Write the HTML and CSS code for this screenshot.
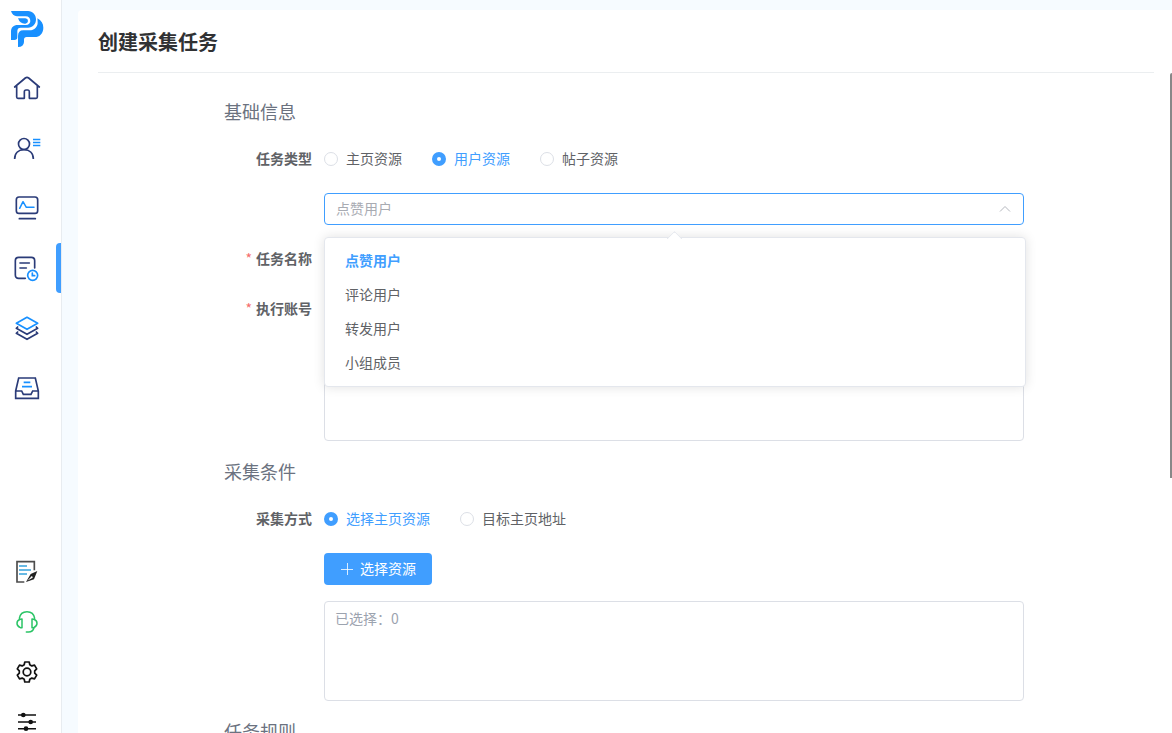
FILE: index.html
```html
<!DOCTYPE html>
<html lang="zh-CN">
<head>
<meta charset="utf-8">
<meta name="viewport" content="width=device-width, initial-scale=1">
<title>创建采集任务</title>
<link rel="stylesheet" href="styles.css">
</head>
<body>
<div class="app">
  <aside class="sidebar">
    <a class="logo" href="#" aria-label="首页">
      <svg width="34" height="38" viewBox="30 30 102 114" fill="#1890ff">
        <path d="M33 33H84C98 33 108 44 108 58C108 73 98 83 84 83H62Q52 83 52 93V112Q52 120 43 120H33V94C33 82 41 75 53 75H78C86 75 91 70 91 63C91 55 86 49 77 49H51Q37 47 33 33Z"/>
        <path d="M54 55H76Q84 56 84 63Q84 70 76 71Q60 72 54 55Z"/>
        <path d="M112 55C124 61 130 71 130 83C130 100 119 111 104 111H80Q72 111 72 119V126Q71 141 54 141V108Q54 91 70 91H88C104 91 113 79 113 68Q113 61 112 55Z"/>
      </svg>
    </a>
    <nav class="nav nav-main">
      <a class="nav-item" href="#" aria-label="主页">
        <svg width="28" height="28" viewBox="39 222 84 84" fill="none" stroke="#2a3b78" stroke-width="5" stroke-linejoin="round" stroke-linecap="round"><path d="M44 261L76 234Q81 230 86 234L118 261M50 258V291Q50 295 54 295H73V275Q73 270 78 270H84Q88 270 88 275V295H108Q112 295 112 291V258"/></svg>
      </a>
      <a class="nav-item" href="#" aria-label="用户">
        <svg width="28" height="28" viewBox="39 42 84 84" fill="none" stroke="#2a3b78" stroke-width="5"><circle cx="72" cy="72" r="16.500"/><path d="M44 117C44 99 56 89 72 89S100 99 100 117"/><path stroke="#1890ff" stroke-width="4" d="M99 58.500H121M99 67.500H121M99 76.500H121"/></svg>
      </a>
      <a class="nav-item" href="#" aria-label="监控">
        <svg width="28" height="28" viewBox="39 222 84 84" fill="none" stroke="#2a3b78" stroke-width="5" stroke-linecap="round"><rect x="49" y="231" width="64" height="49" rx="8"/><path stroke-width="5" d="M58 296H106"/><path stroke="#1890ff" stroke-width="4.500" stroke-linejoin="round" d="M59 265L69 245L79 262H102"/></svg>
      </a>
      <a class="nav-item active" href="#" aria-label="采集任务" aria-current="page">
        <svg width="28" height="28" viewBox="39 57 84 84" fill="none" stroke="#2a3b78" stroke-width="5" stroke-linecap="round"><path d="M76 130H56Q46 130 46 120V77Q46 67 56 67H94Q104 67 104 77V99M60 84H88M60 99H79"/><g stroke="#1890ff"><circle cx="98" cy="121" r="15"/><path d="M97 114V122H104"/></g></svg>
      </a>
      <a class="nav-item" href="#" aria-label="图层">
        <svg width="28" height="28" viewBox="39 237 84 84" fill="none" stroke="#2a3b78" stroke-width="5" stroke-linejoin="round" stroke-linecap="round"><path d="M53 276L49 280L81 298L113 280L109 276M53 291L49 295L81 313L113 295L109 291"/><path stroke="#1890ff" d="M49 265L81 247L113 265L81 283Z"/></svg>
      </a>
      <a class="nav-item" href="#" aria-label="收件箱">
        <svg width="28" height="28" viewBox="39 72 84 84" fill="none" stroke="#2a3b78" stroke-width="5"><path d="M47 123L56 84H106L115 123V145H47ZM47 123H65L70 133H93L98 123H115"/><path stroke="#1890ff" stroke-width="5" d="M71 97H91M66 110H96"/></svg>
      </a>
    </nav>
    <nav class="nav nav-foot">
      <a class="nav-item" href="#" aria-label="记录">
        <svg width="22" height="24" viewBox="48 45 66 72" fill="none" stroke="#4c4c4c" stroke-width="5"><path d="M73 111H51V50H103V76"/><path stroke="#36a3dc" stroke-width="5" d="M57 63H81M57 75H93M57 87H81"/><path fill="#222" stroke="none" d="M112 78L92 87L78 111L102 103ZM82 107L92 97A3 3 0 1 1 95 100Z" fill-rule="evenodd"/></svg>
      </a>
      <a class="nav-item" href="#" aria-label="客服">
        <svg width="24" height="24" viewBox="45 195 72 72" fill="none" stroke="#2bc466" stroke-width="4.500" stroke-linecap="round" stroke-linejoin="round"><path d="M58 220C60 207 69 200 81 200S102 207 104 220M66 222V248H61Q51 244 51 235T61 223ZM96 222V248H101Q111 244 111 235T101 223ZM102 249Q98 261 86 261H79"/></svg>
      </a>
      <a class="nav-item" href="#" aria-label="设置">
        <svg width="24" height="24" viewBox="0 0 24 24" fill="none" stroke="#111" stroke-width="1.700" stroke-linejoin="round"><circle cx="12" cy="12" r="3.800"/><path d="M9.800 2h4.400l.6 2.700 2 1.200 2.700-.8 2.200 3.800-2 1.900v2.400l2 1.900-2.200 3.800-2.700-.8-2 1.200-.6 2.700H9.800l-.6-2.700-2-1.200-2.700.8-2.200-3.800 2-1.900v-2.400l-2-1.900 2.200-3.800 2.700.8 2-1.200z"/></svg>
      </a>
      <a class="nav-item" href="#" aria-label="筛选">
        <svg width="22" height="22" viewBox="48 198 66 66" fill="#111" stroke="#111" stroke-width="4.500"><path d="M54 210H108M54 231H108M54 251H108"/><g stroke="none"><circle cx="70" cy="210" r="7"/><circle cx="92" cy="231" r="7"/><circle cx="78" cy="251" r="7"/></g></svg>
      </a>
    </nav>
  </aside>

  <main class="card">
    <header class="card-head"><h1>创建采集任务</h1></header>
    <form class="form">
      <h2>基础信息</h2>
      <div class="row" role="radiogroup" aria-labelledby="type-label">
        <span class="label" id="type-label">任务类型</span>
        <div class="radios">
          <label class="radio"><input type="radio" name="type"><span>主页资源</span></label>
          <label class="radio"><input type="radio" name="type" checked><span>用户资源</span></label>
          <label class="radio"><input type="radio" name="type"><span>帖子资源</span></label>
        </div>
      </div>
      <div class="row">
        <span class="label"></span>
        <div class="select-wrap">
          <select class="select" aria-label="用户类型">
            <option>点赞用户</option><option>评论用户</option><option>转发用户</option><option>小组成员</option>
          </select>
          <svg class="chevron" width="14" height="14" viewBox="0 0 14 14" fill="none" stroke="#b4b7be"><path d="M2 9.500L7 4.500L12 9.500"/></svg>
          <ul class="dropdown" role="listbox" aria-label="用户类型选项">
            <li class="option selected" role="option" aria-selected="true">点赞用户</li>
            <li class="option" role="option" aria-selected="false">评论用户</li>
            <li class="option" role="option" aria-selected="false">转发用户</li>
            <li class="option" role="option" aria-selected="false">小组成员</li>
          </ul>
        </div>
      </div>
      <div class="row">
        <label class="label required" for="task-name">任务名称</label>
        <input class="input" id="task-name" type="text">
      </div>
      <div class="row">
        <label class="label required" for="accounts">执行账号</label>
        <div class="stack">
          <div class="stack-top"></div>
          <textarea class="input textarea" id="accounts"></textarea>
        </div>
      </div>

      <h2>采集条件</h2>
      <div class="row" role="radiogroup" aria-labelledby="mode-label">
        <span class="label" id="mode-label">采集方式</span>
        <div class="radios">
          <label class="radio"><input type="radio" name="mode" checked><span>选择主页资源</span></label>
          <label class="radio"><input type="radio" name="mode"><span>目标主页地址</span></label>
        </div>
      </div>
      <div class="row">
        <span class="label"></span>
        <div class="stack">
          <button class="button" type="button">
            <svg width="14" height="14" viewBox="0 0 14 14" stroke="#fff" stroke-opacity=".8"><path d="M1 7.500H13M7.500 1V13"/></svg>
            <span>选择资源</span>
          </button>
          <textarea class="input textarea" aria-label="已选择的资源" placeholder="已选择：0"></textarea>
        </div>
      </div>

      <h2>任务规则</h2>
    </form>
    <div class="scroll-thumb"></div>
  </main>
</div>
</body>
</html>
```
FILE: styles.css
```css
* {
  box-sizing: border-box;
}

body {
  margin: 0;
  background: #f6fbff;
  color: #606266;
  font: 14px/20px "Noto Sans CJK SC", sans-serif;
}

h1, h2, ul {
  margin: 0;
  padding: 0;
}

input, select, textarea, button {
  font: inherit;
}

svg {
  display: block;
  flex: none;
}

.app {
  display: flex;
  height: 100vh;
  overflow: hidden;
}

/* Sidebar */
.sidebar {
  display: flex;
  flex: none;
  flex-direction: column;
  width: 62px;
  background: #fff;
  border-right: 1px solid #e8ecf0;
}

.logo {
  padding: 10px 0 10px 10px;
}

.nav {
  display: flex;
  flex: none;
  flex-direction: column;
}

.nav-item {
  display: flex;
  align-items: center;
  justify-content: center;
  padding-right: 7px;
}

.nav-main .nav-item {
  position: relative;
  height: 60px;
}

.nav-foot {
  gap: 28px;
  margin-top: auto;
}

.nav-foot .nav-item {
  height: 22px;
}

.active::after {
  content: "";
  position: absolute;
  top: 5px;
  right: 0;
  width: 5px;
  height: 50px;
  background: #409eff;
  border-radius: 4px 0 0 4px;
}

/* Card */
.card {
  position: relative;
  flex: 1;
  min-width: 0;
  margin: 10px 0 0 16px;
  background: #fff;
  border-radius: 4px 0 0 0;
  overflow: hidden;
}

.card-head {
  margin: 0 18px 0 20px;
  padding: 17px 0 15px;
  border-bottom: 1px solid #ebeef0;
}

h1 {
  color: #303133;
  font-size: 20px;
  line-height: 30px;
}

.scroll-thumb {
  position: absolute;
  top: 63px;
  right: 0;
  width: 2px;
  height: 405px;
  background: #888;
  border-radius: 2px 0 0 0;
}

/* Form */
.form {
  max-width: 842px;
  margin: 0 auto;
  padding: 27px 22px 0 20px;
}

h2 {
  margin-bottom: 21px;
  color: #6b7280;
  font-size: 18px;
  font-weight: 400;
  line-height: 22px;
}

.row {
  display: flex;
  min-height: 32px;
  margin-bottom: 18px;
}

.row + h2 {
  margin-top: 19px;
}

.label {
  flex: none;
  width: 100px;
  padding-right: 12px;
  font-weight: 700;
  line-height: 30px;
  text-align: right;
}

.required::before {
  content: "*";
  margin-right: 4px;
  color: #f56c6c;
  font-weight: 400;
}

.radios {
  display: flex;
  gap: 30px;
}

.radio {
  display: flex;
  align-items: center;
  gap: 8px;
}

.radio span,
.button span {
  padding-bottom: 2px;
}

.radio input {
  width: 14px;
  height: 14px;
  margin: 0;
  appearance: none;
  background: #fff;
  border: 1px solid #dcdfe6;
  border-radius: 50%;
}

.radio input:checked {
  border: 5px solid #409eff;
}

.radio input:checked + span {
  color: #409eff;
}

.select-wrap {
  position: relative;
  flex: 1;
}

.select {
  display: block;
  width: 100%;
  height: 32px;
  padding: 0 30px 2px 11px;
  appearance: none;
  background: #fff;
  border: 1px solid #409eff;
  border-radius: 4px;
  color: #a8abb2;
}

.chevron {
  position: absolute;
  top: 9px;
  right: 12px;
}

.dropdown {
  position: absolute;
  z-index: 1;
  top: 44px;
  left: 0;
  right: -2px;
  padding: 5px 0 7px;
  background: #fff;
  border: 1px solid #e4e7ed;
  border-radius: 4px;
  box-shadow: 0 0 12px rgba(0, 0, 0, 0.12);
  list-style: none;
}

.dropdown::before {
  content: "";
  position: absolute;
  top: -5px;
  left: calc(50% - 6px);
  width: 10px;
  height: 10px;
  background: #fff;
  border: solid #e4e7ed;
  border-width: 1px 0 0 1px;
  border-radius: 2px 0 0 0;
  transform: rotate(45deg);
}

.option {
  padding: 0 20px;
  line-height: 34px;
}

.selected {
  color: #409eff;
  font-weight: 700;
}

.input {
  flex: 1;
  min-width: 0;
  padding: 0 11px;
  background: #fff;
  border: 1px solid #dcdfe6;
  border-radius: 4px;
  color: #606266;
}

.stack {
  display: flex;
  flex: 1;
  flex-direction: column;
  align-items: flex-start;
  gap: 16px;
}

.stack-top {
  height: 32px;
}

.textarea {
  flex: none;
  width: 100%;
  height: 100px;
  padding: 6px 10px;
  resize: none;
}

.textarea::placeholder {
  color: #9ca3af;
}

.row:has(.textarea) {
  margin-bottom: 0;
}

.button {
  display: flex;
  align-items: center;
  gap: 6px;
  height: 32px;
  padding: 0 16px;
  background: #409eff;
  border: 0;
  border-radius: 4px;
  color: #fff;
}
```
